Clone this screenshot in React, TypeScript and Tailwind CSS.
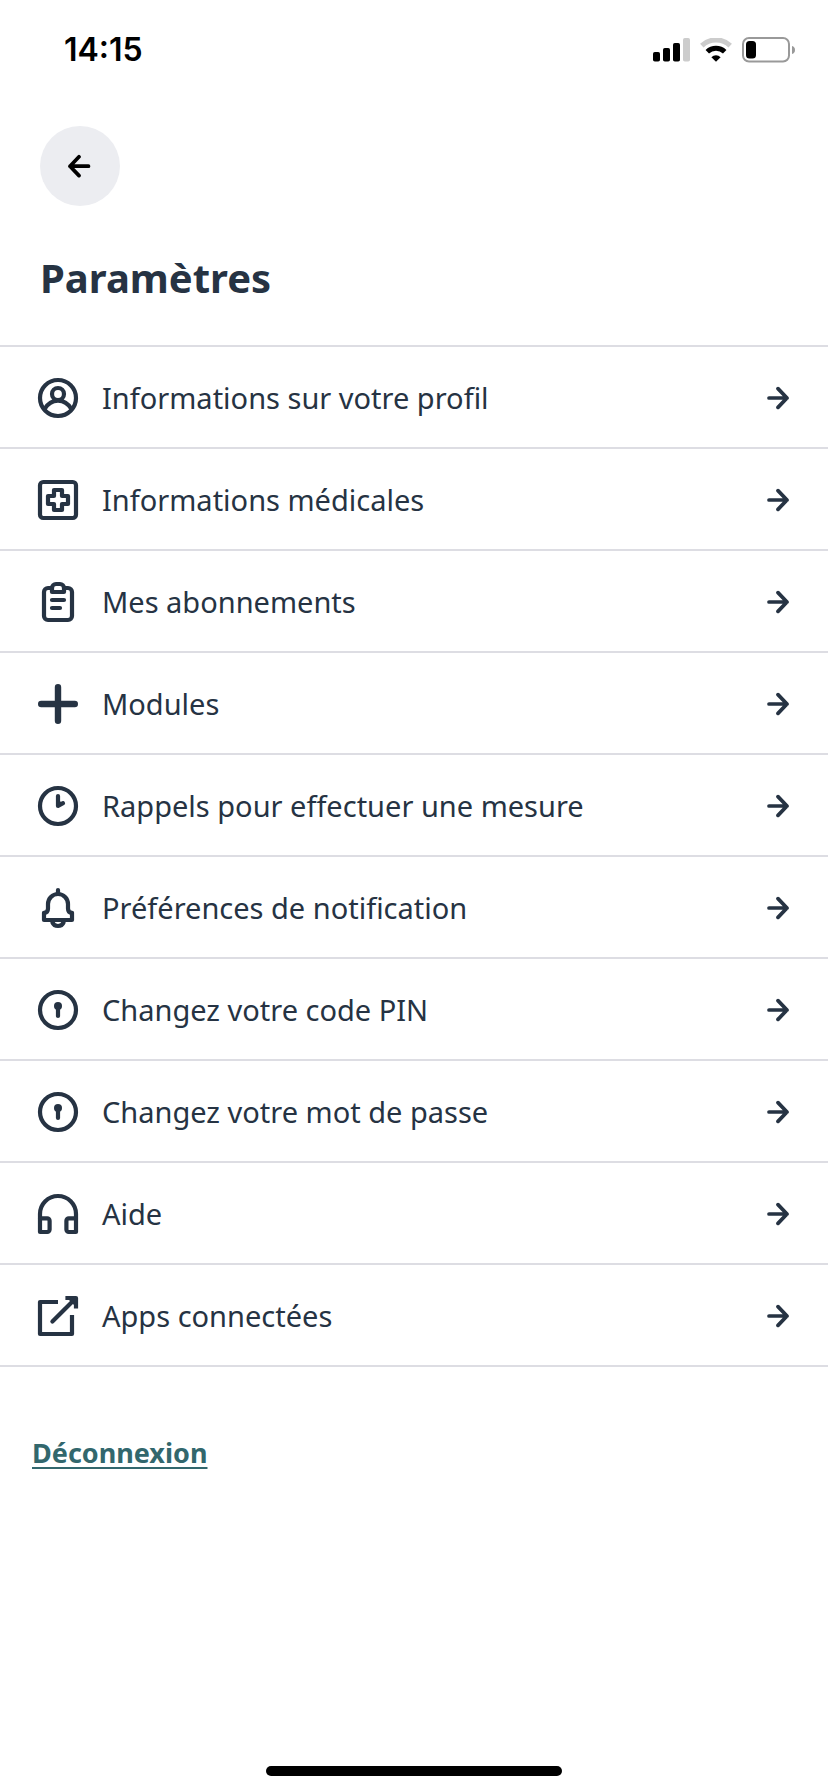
import type { ReactNode } from "react";

type IconProps = {
  children: ReactNode;
};

const Icon = ({ children }: IconProps) => (
  <svg
    viewBox="0 0 24 24"
    className="size-12 shrink-0"
    fill="none"
    stroke="currentColor"
    strokeWidth={2.1}
    strokeLinecap="round"
    strokeLinejoin="round"
    aria-hidden="true"
  >
    {children}
  </svg>
);

const ProfileIcon = () => (
  <Icon>
    <circle cx="12" cy="12" r="9" />
    <circle cx="12" cy="10" r="3" />
    <path d="M5.2 17.6C6.8 14.9 9.2 13.3 12 13.3s5.2 1.6 6.8 4.3" />
  </Icon>
);

const MedicalIcon = () => (
  <Icon>
    <rect x="3" y="3" width="18" height="18" rx="1.6" />
    <path d="M10 7h4v3h3v4h-3v3h-4v-3H7v-4h3z" />
  </Icon>
);

const ClipboardIcon = () => (
  <Icon>
    <path d="M9 5H7a2 2 0 0 0-2 2v12a2 2 0 0 0 2 2h10a2 2 0 0 0 2-2V7a2 2 0 0 0-2-2h-2" />
    <path d="M9 7V5a2 2 0 0 1 2-2h2a2 2 0 0 1 2 2v2z" />
    <path d="M9 11h6M9 15h4" />
  </Icon>
);

const PlusIcon = () => (
  <Icon>
    <path d="M12 3.600v16.800M3.600 12h16.800" strokeWidth={3.2} />
  </Icon>
);

const ClockIcon = () => (
  <Icon>
    <circle cx="12" cy="12" r="9" />
    <path d="M12 7v5l2.500-1.400" />
    <path d="M12 9l2.500 1.600L12 12z" fill="currentColor" stroke="none" />
  </Icon>
);

const BellIcon = () => (
  <Icon>
    <path d="M12 3v2M5 18v-3.600c1.300-.1 2-.9 2-2.200V10a5 5 0 0 1 10 0v2.200c0 1.300.7 2.100 2 2.200V18z" />
    <path d="M9.200 19.200c.5 1.200 1.500 1.800 2.800 1.800s2.300-.6 2.800-1.800" />
  </Icon>
);

const KeyholeIcon = () => (
  <Icon>
    <circle cx="12" cy="12" r="9" />
    <circle cx="12" cy="10" r="2" fill="currentColor" stroke="none" />
    <path d="M12 10v5" />
  </Icon>
);

const HeadphonesIcon = () => (
  <Icon>
    <path d="M3 14.200V12a9 9 0 0 1 18 0v2.200" />
    <path d="M3 14.200h3.600a1.200 1.200 0 0 1 1.200 1.200v4.400A1.200 1.200 0 0 1 6.600 21H3z" />
    <path d="M21 14.200h-3.600a1.200 1.200 0 0 0-1.200 1.200v4.400a1.200 1.200 0 0 0 1.200 1.200H21z" />
  </Icon>
);

const ExternalIcon = () => (
  <Icon>
    <path d="M12 5H3v16h16v-9.500" strokeLinecap="butt" />
    <path d="M9.200 14.800 20.500 3.500" />
    <path d="M15.700 3H21v5.300" strokeLinecap="butt" />
    <path d="M16.500 3H21v4.500z" fill="currentColor" stroke="none" />
  </Icon>
);

const ArrowRight = () => (
  <svg
    viewBox="0 0 24 24"
    className="size-6 shrink-0"
    fill="none"
    stroke="currentColor"
    strokeWidth={3.7}
    strokeLinecap="round"
    strokeLinejoin="round"
    aria-hidden="true"
  >
    <path d="M3 12h18M12 2.600l9 9.400-9 9.400" />
  </svg>
);

const ArrowLeft = () => (
  <svg
    viewBox="0 0 24 24"
    className="size-6 shrink-0"
    fill="none"
    stroke="currentColor"
    strokeWidth={3.7}
    strokeLinecap="round"
    strokeLinejoin="round"
    aria-hidden="true"
  >
    <path d="M20.500 12.200H2M11 2.800l-9 9.400 9 9.400" />
  </svg>
);

const items = [
  { label: "Informations sur votre profil", icon: ProfileIcon },
  { label: "Informations médicales", icon: MedicalIcon },
  { label: "Mes abonnements", icon: ClipboardIcon },
  { label: "Modules", icon: PlusIcon },
  { label: "Rappels pour effectuer une mesure", icon: ClockIcon },
  { label: "Préférences de notification", icon: BellIcon },
  { label: "Changez votre code PIN", icon: KeyholeIcon },
  { label: "Changez votre mot de passe", icon: KeyholeIcon },
  { label: "Aide", icon: HeadphonesIcon },
  { label: "Apps connectées", icon: ExternalIcon },
];

const StatusBar = () => (
  <div className="flex items-center justify-between pt-7 pr-8 pl-16 text-black">
    <span className="font-['Inter',sans-serif] text-[32px] leading-11 font-semibold">14:15</span>
    <div className="flex items-center gap-2.5">
      <svg viewBox="0 0 37 24" className="h-6 w-[37px]" fill="currentColor" aria-hidden="true">
        <rect x="0" y="14" width="7" height="9.500" rx="1.800" />
        <rect x="10" y="10" width="7" height="13.500" rx="1.800" />
        <rect x="20" y="5" width="7" height="18.500" rx="1.800" />
        <rect x="30" y="0" width="7" height="23.500" rx="1.800" fill="#cccccc" />
      </svg>
      <svg viewBox="0 0 32 24" className="h-6 w-8" fill="none" aria-hidden="true">
        <path d="M1.800 7.600a20.500 20.500 0 0 1 28.400 0" stroke="#cccccc" strokeWidth="5" />
        <path d="M7.300 13.800a12.600 12.600 0 0 1 17.400 0" stroke="#000000" strokeWidth="5" />
        <path d="M16 23.800l-4.600-4.600a6.600 6.600 0 0 1 9.200 0z" fill="#000000" />
      </svg>
      <svg viewBox="0 0 54 26" className="h-[26px] w-[54px]" aria-hidden="true">
        <rect x="1" y="1" width="46" height="23.500" rx="6" fill="none" stroke="#999999" strokeWidth="2" />
        <rect x="4" y="4" width="10" height="17.500" rx="3.500" fill="#000000" />
        <path d="M50 9c2 .6 3 2 3 4s-1 3.400-3 4z" fill="#999999" />
      </svg>
    </div>
  </div>
);

const App = () => {
  return (
    <div className="flex min-h-screen flex-col bg-white font-['Noto_Sans',sans-serif] text-[#263343]">
      <StatusBar />
      <header className="px-10 pt-[54px] pb-[39px]">
        <button
          type="button"
          aria-label="Retour"
          className="flex size-20 items-center justify-center rounded-full bg-[#ecedf1] text-black"
        >
          <ArrowLeft />
        </button>
        <h1 className="mt-11 text-[40px] leading-[56px] font-bold">Paramètres</h1>
      </header>
      <nav>
        <ul className="border-t-2 border-[#dddde3]">
          {items.map(({ label, icon: RowIcon }) => (
            <li key={label} className="border-b-2 border-[#dddde3]">
              <a href="#" className="flex h-25 items-center pt-0.5 pr-[38px] pl-[34px]">
                <RowIcon />
                <span className="ml-5 flex-1 text-[29px] leading-10">{label}</span>
                <ArrowRight />
              </a>
            </li>
          ))}
        </ul>
      </nav>
      <div className="px-8 pt-16">
        <button
          type="button"
          className="text-[27px] leading-11 font-bold text-[#32676d] underline decoration-2 underline-offset-4"
        >
          Déconnexion
        </button>
      </div>
      <div className="mt-auto flex justify-center pt-10 pb-4">
        <div className="h-2.5 w-[296px] rounded-full bg-black" />
      </div>
    </div>
  );
};

export default App;
